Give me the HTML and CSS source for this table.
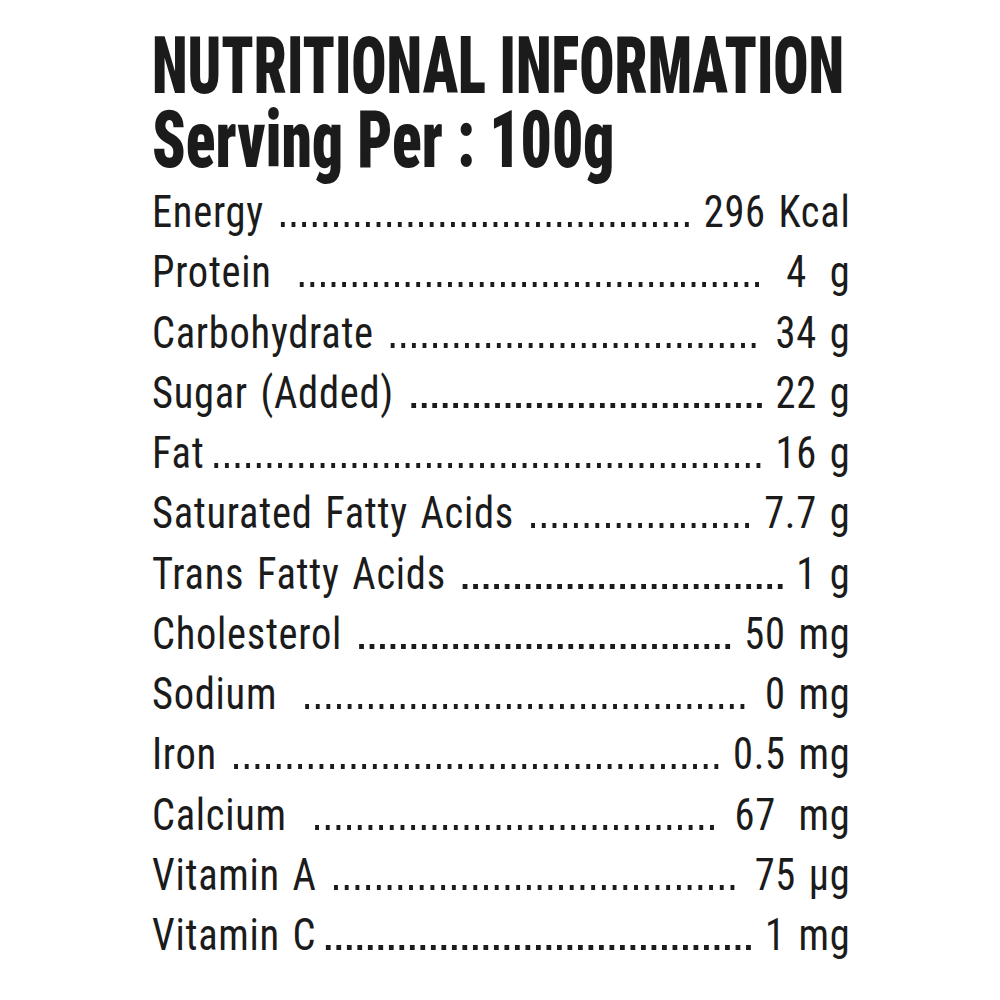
FILE: index.html
```html
<!DOCTYPE html>
<html lang="en">
<head>
<meta charset="utf-8">
<title>Nutritional Information</title>
<link rel="stylesheet" href="styles.css">
</head>
<body>
<main class="panel">
  <header class="head">
    <h1 class="title title-main">NUTRITIONAL INFORMATION</h1>
    <h2 class="title title-sub">Serving Per : 100g</h2>
  </header>
  <ul class="facts">
    <li class="row"><span class="name">Energy</span><span class="dots"></span><span class="val">296 Kcal</span></li>
    <li class="row"><span class="name">Protein</span><span class="dots wide-l"></span><span class="val wide spaced">4 g</span></li>
    <li class="row"><span class="name">Carbohydrate</span><span class="dots"></span><span class="val mid">34 g</span></li>
    <li class="row"><span class="name">Sugar (Added)</span><span class="dots"></span><span class="val">22 g</span></li>
    <li class="row"><span class="name">Fat</span><span class="dots tight-l"></span><span class="val">16 g</span></li>
    <li class="row"><span class="name">Saturated Fatty Acids</span><span class="dots"></span><span class="val">7.7 g</span></li>
    <li class="row"><span class="name">Trans Fatty Acids</span><span class="dots"></span><span class="val">1 g</span></li>
    <li class="row"><span class="name">Cholesterol</span><span class="dots"></span><span class="val">50 mg</span></li>
    <li class="row"><span class="name">Sodium</span><span class="dots wide-l"></span><span class="val mid">0 mg</span></li>
    <li class="row"><span class="name">Iron</span><span class="dots"></span><span class="val">0.5 mg</span></li>
    <li class="row"><span class="name">Calcium</span><span class="dots wide-l"></span><span class="val mid spaced">67 mg</span></li>
    <li class="row"><span class="name">Vitamin A</span><span class="dots"></span><span class="val mid">75 µg</span></li>
    <li class="row"><span class="name">Vitamin C</span><span class="dots tight-l"></span><span class="val">1 mg</span></li>
  </ul>
</main>
</body>
</html>
```
FILE: styles.css
```css
html, body {
  margin: 0;
  padding: 0;
  background: #ffffff;
}

.panel {
  padding: 29px 0 0 152px;
  color: #1b1b1b;
  font-family: "Roboto Condensed", "Roboto", "Liberation Sans", sans-serif;
  font-stretch: condensed;
}

.head {
  display: flex;
  flex-direction: column;
  align-items: flex-start;
}

.title {
  margin: 0;
  font-size: 79px;
  line-height: 74px;
  font-weight: 900;
  white-space: nowrap;
  transform-origin: left top;
}

.title-main {
  transform: scaleX(0.740);
}

.title-sub {
  transform: scaleX(0.777);
}

.facts {
  list-style: none;
  margin: 5px 0 0 0;
  padding: 0;
  width: 776px;
  transform: scaleX(0.9);
  transform-origin: left top;
}

.row {
  display: flex;
  align-items: baseline;
  font-size: 45px;
  line-height: 60.25px;
  font-weight: 400;
  letter-spacing: 0.8px;
  word-spacing: 3px;
  white-space: nowrap;
}

.dots {
  flex: 1;
  height: 5px;
  margin: 0 12px 0 16px;
  background-image: linear-gradient(to right, transparent 3px, #1b1b1b 3px, #1b1b1b 8px, transparent 8px);
  background-size: 11.8px 5px;
  background-repeat: round no-repeat;
  background-position: left bottom;
}

.dots.wide-l { margin-left: 28px; }
.dots.tight-l { margin-left: 8px; }
.val.mid { margin-left: 6px; }
.val.wide { margin-left: 14px; }
.val.spaced { word-spacing: 14px; }
```
